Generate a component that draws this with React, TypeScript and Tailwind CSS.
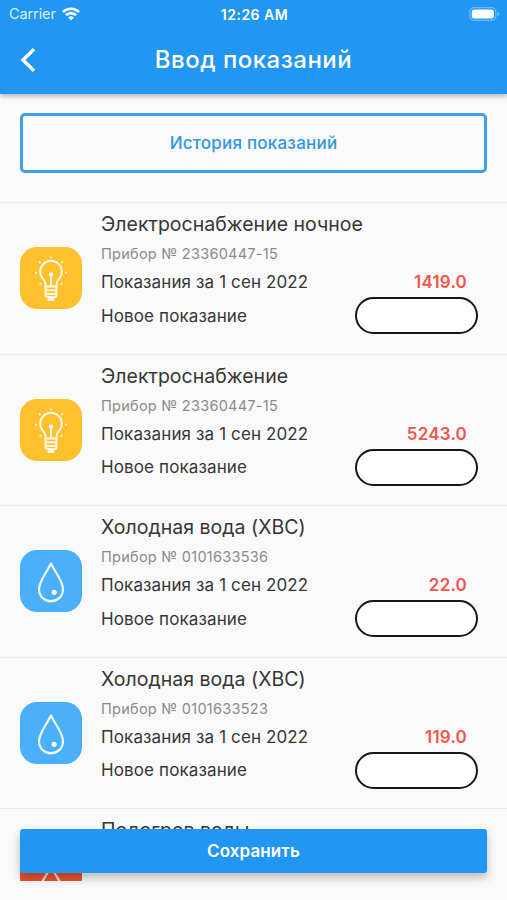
import React from 'react'

type Meter = {
    title: string
    device?: string
    value?: string
    kind: 'light' | 'cold' | 'hot'
}

const meters: Meter[] = [
    { title: 'Электроснабжение ночное', device: '23360447-15', value: '1419.0', kind: 'light' },
    { title: 'Электроснабжение', device: '23360447-15', value: '5243.0', kind: 'light' },
    { title: 'Холодная вода (ХВС)', device: '0101633536', value: '22.0', kind: 'cold' },
    { title: 'Холодная вода (ХВС)', device: '0101633523', value: '119.0', kind: 'cold' },
    { title: 'Подогрев воды', kind: 'hot' },
]

const tileColors = {
    light: 'bg-[#fec02d]',
    cold: 'bg-[#4bb0fc]',
    hot: 'bg-[#e9552f]',
}

function BulbIcon() {
    return (
        <svg viewBox="0 0 62 62" className="size-full" fill="none" stroke="#fff9e6" strokeWidth="1.9" strokeLinecap="round" strokeLinejoin="round">
            <path d="M25.5 39.5v-2.2c0-2.4-1.3-3.8-2.8-5.8a10.8 10.8 0 1 1 16.6 0c-1.5 2-2.8 3.4-2.8 5.8v2.2" />
            <path d="M31 29v10" />
            <circle cx="31" cy="27.5" r="1.3" fill="#fff9e6" />
            <path d="M25.5 39.5h11M25.5 43.2h11M25.5 47h11M25.5 39.5v8.5c0 1.2.8 2 2 2h7c1.2 0 2-.8 2-2v-8.5" />
            <path d="M29 52.5h4" strokeWidth="3" />
            <g fill="#fff9e6" stroke="none">
                <circle cx="31" cy="10.5" r="1.1" />
                <circle cx="19.8" cy="15.3" r="1.1" />
                <circle cx="42.2" cy="15.3" r="1.1" />
                <circle cx="16" cy="26" r="1.1" />
                <circle cx="46" cy="26" r="1.1" />
                <circle cx="20.5" cy="37" r="1.1" />
                <circle cx="41.5" cy="37" r="1.1" />
            </g>
        </svg>
    )
}

function DropIcon() {
    return (
        <svg viewBox="0 0 62 62" className="size-full" fill="none" stroke="#f0fbff" strokeWidth="2.2" strokeLinejoin="round">
            <path d="M31 13.5C27 22 19 31 19 39.3c0 7 5.4 11.9 12 11.9s12-4.900 12-11.900C43 31 35 22 31 13.500z" />
            <circle cx="34.2" cy="42.3" r="2.6" fill="#f0fbff" stroke="none" />
        </svg>
    )
}

function HotDropIcon() {
    return (
        <svg viewBox="0 0 62 62" className="size-full" fill="none" stroke="#f0ddd8" strokeWidth="2.2" strokeLinejoin="round">
            <path d="M31 13.500C28.500 18.500 25 24 22 29c-2.500 4-4 7-4 11 0 7 5.500 12 13 12s13-5 13-12c0-4-1.500-7-4-11-3-5-6.500-10.500-9-15.500z" />
        </svg>
    )
}

function StatusBar() {
    return (
        <div className="grid h-7 grid-cols-3 items-center pr-[7px] pl-[9px] text-white">
            <div className="flex items-center gap-1.5">
                <span className="text-[14.5px] tracking-[-0.1px] text-[#d9f0ff]">Carrier</span>
                <svg viewBox="0 0 18 14" className="h-[14px] w-[18px]" fill="none" stroke="white" strokeWidth="2.6">
                    <path d="M.9 5.1a11.5 11.5 0 0 1 16.2 0" />
                    <path d="M3.9 8.2a7.2 7.2 0 0 1 10.2 0" />
                    <path d="M9 13.6l-2.8-2.9a4 4 0 0 1 5.600 0z" fill="white" stroke="none" />
                </svg>
            </div>
            <span className="text-center text-[14px] font-semibold tracking-[0.5px] whitespace-nowrap">12:26 AM</span>
            <svg viewBox="0 0 31 14" className="h-[14px] w-[31px] justify-self-end">
                <rect x=".9" y=".7" width="26" height="12.6" rx="4" fill="none" stroke="#6dbbf8" strokeWidth="1.2" />
                <rect x="2.8" y="2.4" width="22.2" height="9.2" rx="2.4" fill="white" />
                <path d="M28.400 5c1.300.4 2 1.100 2 2s-.7 1.600-2 2z" fill="#6dbbf8" />
            </svg>
        </div>
    )
}

function MeterRow({ meter }: { meter: Meter }) {
    return (
        <li className="flex h-[151.5px] shrink-0 items-center border-t border-[#ebebeb] pr-[29px] pl-5">
            <div className={`size-[62px] shrink-0 overflow-hidden rounded-[17px] ${tileColors[meter.kind]}`}>
                {meter.kind === 'light' && <BulbIcon />}
                {meter.kind === 'cold' && <DropIcon />}
                {meter.kind === 'hot' && <HotDropIcon />}
            </div>
            <div className="ml-[19px] flex h-full flex-1 flex-col pt-[9px] text-[#363636]">
                <h2 className="text-[19.5px] leading-6 tracking-[0.02px]">{meter.title}</h2>
                {meter.device && (
                    <p className="mt-[8px] text-[14.5px] leading-5 tracking-[0.27px] text-[#8b8b8b]">Прибор № {meter.device}</p>
                )}
                {meter.value && (
                    <>
                        <div className="mt-[7px] flex justify-between pr-[11px] text-[17px] leading-[22px] tracking-[0.12px]">
                            <span>Показания за 1 сен 2022</span>
                            <span className="font-semibold tracking-[0.2px] text-[#f2554a]">{meter.value}</span>
                        </div>
                        <label className="mt-[4px] flex items-center justify-between text-[17px] tracking-[0.12px]">
                            <span className="pt-0.5">Новое показание</span>
                            <input className="h-[37px] w-[123px] rounded-full border-2 border-[#161616] bg-white px-4 outline-none" />
                        </label>
                    </>
                )}
            </div>
        </li>
    )
}

function App() {
    return (
        <div className="relative flex h-[900px] w-[507px] flex-col overflow-hidden bg-[#fafafa] font-['Inter','Liberation_Sans',sans-serif]">
            <header className="z-10 h-[94px] shrink-0 bg-[#2196f3] shadow-[0_2px_5px_rgba(0,0,0,0.3)]">
                <StatusBar />
                <div className="grid h-[64px] grid-cols-[60px_1fr_60px] items-center text-white">
                    <svg viewBox="0 0 16 26" className="ml-5 h-[26px] w-4" fill="none" stroke="white" strokeWidth="3.4">
                        <path d="M14 2.2L3 13l11 10.8" />
                    </svg>
                    <h1 className="text-center text-[24px] font-medium tracking-[0.5px] whitespace-nowrap">Ввод показаний</h1>
                </div>
            </header>
            <main className="flex h-[787px] shrink-0 flex-col overflow-hidden">
                <button className="mx-5 mt-[19px] h-[60px] shrink-0 rounded-[5px] border-3 border-[#3f9fe8] pt-px text-[17px] font-medium tracking-[0.22px] text-[#3196e4]">
                    История показаний
                </button>
                <ul className="mt-[29px] flex flex-col">
                    {meters.map((meter, index) => (
                        <MeterRow key={index} meter={meter} />
                    ))}
                </ul>
            </main>
            <button className="absolute inset-x-5 top-[829px] h-11 rounded-[3px] bg-[#2196f3] pt-0.5 text-[17px] font-semibold tracking-[0.1px] text-white shadow-[0_5px_10px_rgba(0,0,0,0.25)]">
                Сохранить
            </button>
        </div>
    )
}

export default App
